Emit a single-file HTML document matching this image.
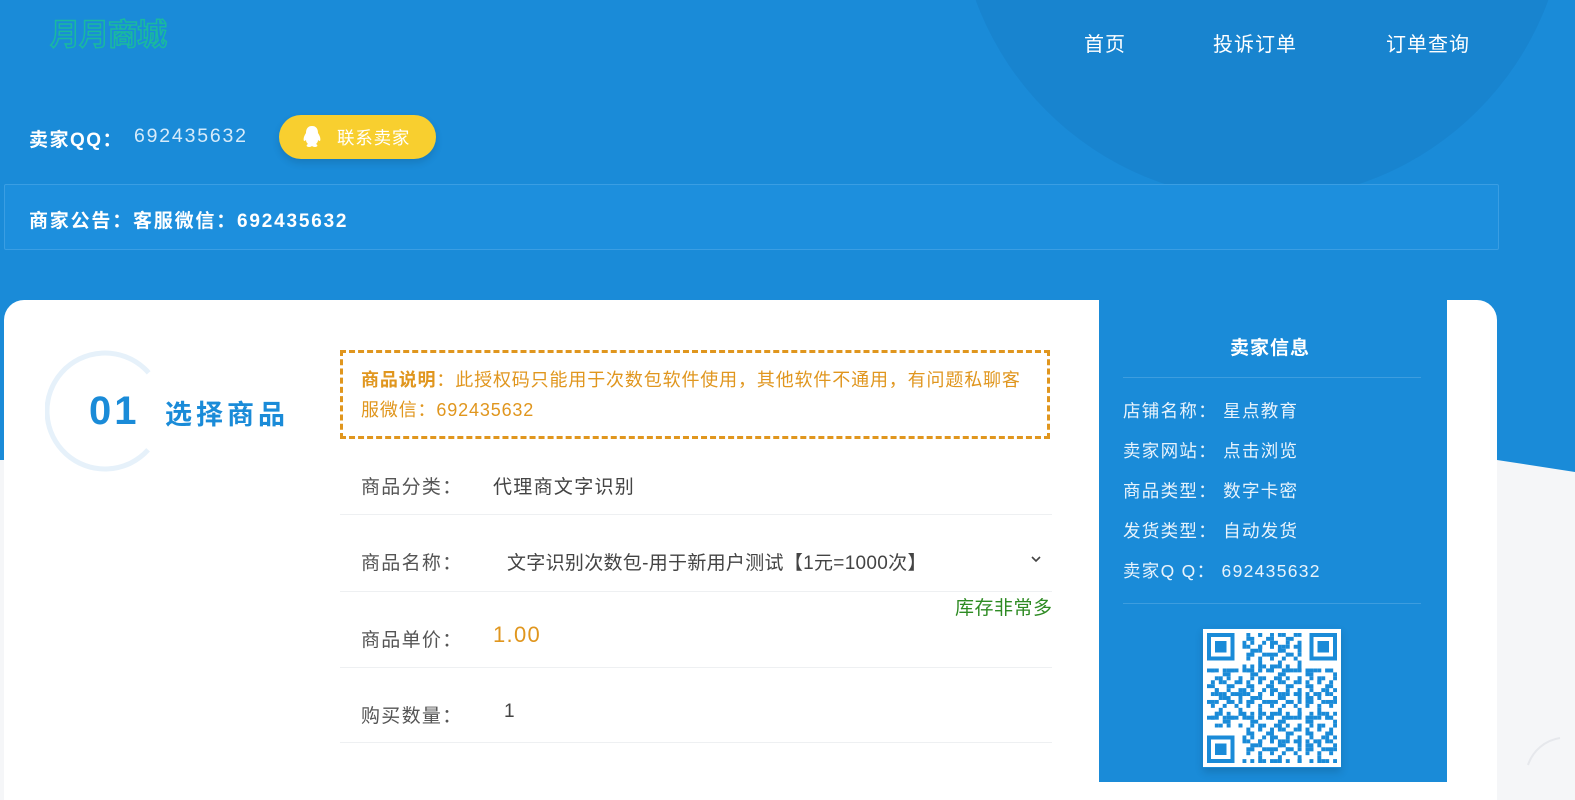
<!DOCTYPE html>
<html><head><meta charset="utf-8"><style>
*{margin:0;padding:0;box-sizing:border-box}
body{width:1575px;height:782px;overflow:hidden;position:relative;background:#f5f6f8;font-family:"Liberation Sans","Noto Sans CJK SC",sans-serif}
.bg{position:absolute;left:0;top:0;width:1575px;height:782px}
.abs{position:absolute}
.nav a{position:absolute;top:28px;color:#fff;font-size:20px;text-decoration:none;letter-spacing:1px}
.row{position:absolute;left:340px;width:712px;border-bottom:1px solid #eef0f2;font-size:19px;color:#555;letter-spacing:1.3px}
.row .l{position:absolute;left:21px}
.info{position:absolute;left:1123px;color:#e8f3fc;font-size:17.5px;letter-spacing:1.3px}
</style></head><body>
<svg class="bg" viewBox="0 0 1575 782">
<rect width="1575" height="782" fill="#f5f6f8"/>
<polygon points="0,0 1575,0 1575,472 1497,460 0,460" fill="#1a8bd8"/>
<circle cx="1262" cy="-105" r="305" fill="#1884cf"/>
<path d="M1528 765 A40 40 0 0 1 1560 738" stroke="#e6e8ec" stroke-width="2" fill="none"/>
</svg>
<div class="abs" style="left:50px;top:10px;font-size:30px;font-weight:bold;color:#1a8bd8;-webkit-text-stroke:1.5px #19b9a0;letter-spacing:-1px;font-family:'Noto Sans CJK SC',sans-serif">月月商城</div>
<div class="nav"><a style="left:1084px">首页</a><a style="left:1213px">投诉订单</a><a style="left:1386px">订单查询</a></div>
<div class="abs" style="left:29px;top:125px;color:#fff;font-size:19px;font-weight:bold;letter-spacing:1.5px">卖家QQ：</div>
<div class="abs" style="left:134px;top:125px;color:#d6ebfa;font-size:19.5px;letter-spacing:1.8px">692435632</div>
<div class="abs" style="left:279px;top:115px;width:157px;height:44px;border-radius:22px;background:#f8cf2f;box-shadow:0 4px 8px rgba(0,0,0,.12)">
<svg class="abs" style="left:22px;top:10px" width="22" height="24" viewBox="0 0 22 24"><path d="M11 1C6 1 5 5 5 8c-2 3-3 6-2 8 1 0 2-1 2-1 0 2 1 3 2 4-2 1-2 3 1 3 2 0 3-1 3-1s1 1 3 1c3 0 3-2 1-3 1-1 2-2 2-4 0 0 1 1 2 1 1-2 0-5-2-8 0-3-1-7-6-7z" fill="#fff"/></svg>
<span class="abs" style="left:58px;top:10px;color:#fff;font-size:17.5px;letter-spacing:.8px">联系卖家</span></div>
<div class="abs" style="left:4px;top:184px;width:1495px;height:66px;border:1px solid #3a9ee3;background:#1d8fdd;border-radius:2px"></div>
<div class="abs" style="left:29px;top:206px;color:#fff;font-size:19px;font-weight:bold;letter-spacing:1.8px">商家公告：客服微信：692435632</div>
<div class="abs" style="left:4px;top:300px;width:1493px;height:500px;background:#fff;border-radius:20px 20px 0 0"></div>
<svg class="abs" style="left:45px;top:347px" width="130" height="128"><circle cx="60" cy="64" r="58" fill="none" stroke="#e6f1fa" stroke-width="5" stroke-dasharray="280 85" transform="rotate(42 60 64)"/></svg>
<div class="abs" style="left:89px;top:389px;color:#1a8bd8;font-size:40px;font-weight:bold;letter-spacing:3px">01</div>
<div class="abs" style="left:165px;top:393px;color:#1a8bd8;font-size:27px;font-weight:bold;letter-spacing:4px">选择商品</div>
<div class="abs" style="left:340px;top:350px;width:710px;height:89px;border:3px dashed #e0961e"></div>
<div class="abs" style="left:361px;top:365px;width:672px;color:#e0961e;font-size:18px;line-height:30px;letter-spacing:.85px"><b>商品说明</b>：此授权码只能用于次数包软件使用，其他软件不通用，有问题私聊客服微信：692435632</div>
<div class="row" style="top:440px;height:75px"><span class="l" style="top:32px">商品分类：</span><span class="abs" style="left:153px;top:32px;color:#444">代理商文字识别</span></div>
<div class="row" style="top:515px;height:77px"><span class="l" style="top:33px">商品名称：</span><span class="abs" style="left:167px;top:33px;color:#444;letter-spacing:.3px">文字识别次数包-用于新用户测试【1元=1000次】</span>
<svg class="abs" style="left:690px;top:40px" width="12" height="8" viewBox="0 0 12 8"><path d="M2 2l4 4 4-4" stroke="#444" stroke-width="1.6" fill="none"/></svg></div>
<div class="abs" style="left:955px;top:593px;color:#2e8b23;font-size:19px;letter-spacing:.5px">库存非常多</div>
<div class="row" style="top:592px;height:76px"><span class="l" style="top:33px">商品单价：</span><span class="abs" style="left:153px;top:30px;color:#e0961e;font-size:22px">1.00</span></div>
<div class="row" style="top:668px;height:75px"><span class="l" style="top:33px">购买数量：</span><span class="abs" style="left:164px;top:33px;color:#444">1</span></div>
<div class="abs" style="left:1099px;top:300px;width:348px;height:482px;background:#1a8bd8"></div>
<div class="abs" style="left:1230px;top:333px;color:#fff;font-size:19px;font-weight:bold;letter-spacing:1px">卖家信息</div>
<div class="abs" style="left:1123px;top:377px;width:298px;border-top:1px solid #3d9ddf"></div>
<div class="info" style="top:398px">店铺名称：&nbsp;星点教育</div>
<div class="info" style="top:438px">卖家网站：&nbsp;点击浏览</div>
<div class="info" style="top:478px">商品类型：&nbsp;数字卡密</div>
<div class="info" style="top:518px">发货类型：&nbsp;自动发货</div>
<div class="info" style="top:558px">卖家Q Q：&nbsp;692435632</div>
<div class="abs" style="left:1123px;top:603px;width:298px;border-top:1px solid #3d9ddf"></div>
<svg class="abs" style="left:1203px;top:628px;box-shadow:0 4px 8px rgba(0,0,0,.15)" width="138" height="140" viewBox="0 0 35 35" shape-rendering="crispEdges">
<defs>
<pattern id="p1" width="3" height="3" patternUnits="userSpaceOnUse"><rect x="0" y="0" width="1" height="1" fill="#1a8bd8"/><rect x="2" y="1" width="1" height="1" fill="#1a8bd8"/></pattern>
<pattern id="p2" width="5" height="4" patternUnits="userSpaceOnUse"><rect x="1" y="2" width="2" height="1" fill="#1a8bd8"/><rect x="4" y="0" width="1" height="2" fill="#1a8bd8"/></pattern>
<pattern id="p3" width="7" height="6" patternUnits="userSpaceOnUse"><rect x="3" y="3" width="1" height="2" fill="#1a8bd8"/><rect x="5" y="5" width="2" height="1" fill="#1a8bd8"/><rect x="0" y="4" width="1" height="1" fill="#1a8bd8"/></pattern>
</defs>
<rect width="35" height="35" fill="#fff"/>
<rect x="1" y="1" width="33" height="33" fill="url(#p1)"/>
<rect x="1" y="1" width="33" height="33" fill="url(#p2)"/>
<rect x="1" y="1" width="33" height="33" fill="url(#p3)"/>
<g fill="#fff"><rect x="0" y="0" width="10" height="10"/><rect x="25" y="0" width="10" height="10"/><rect x="0" y="25" width="10" height="10"/></g>
<g fill="#1a8bd8"><rect x="1" y="1" width="7" height="7"/><rect x="27" y="1" width="7" height="7"/><rect x="1" y="27" width="7" height="7"/></g>
<g fill="#fff"><rect x="2" y="2" width="5" height="5"/><rect x="28" y="2" width="5" height="5"/><rect x="2" y="28" width="5" height="5"/></g>
<g fill="#1a8bd8"><rect x="3" y="3" width="3" height="3"/><rect x="29" y="3" width="3" height="3"/><rect x="3" y="29" width="3" height="3"/></g>
</svg>
</body></html>
